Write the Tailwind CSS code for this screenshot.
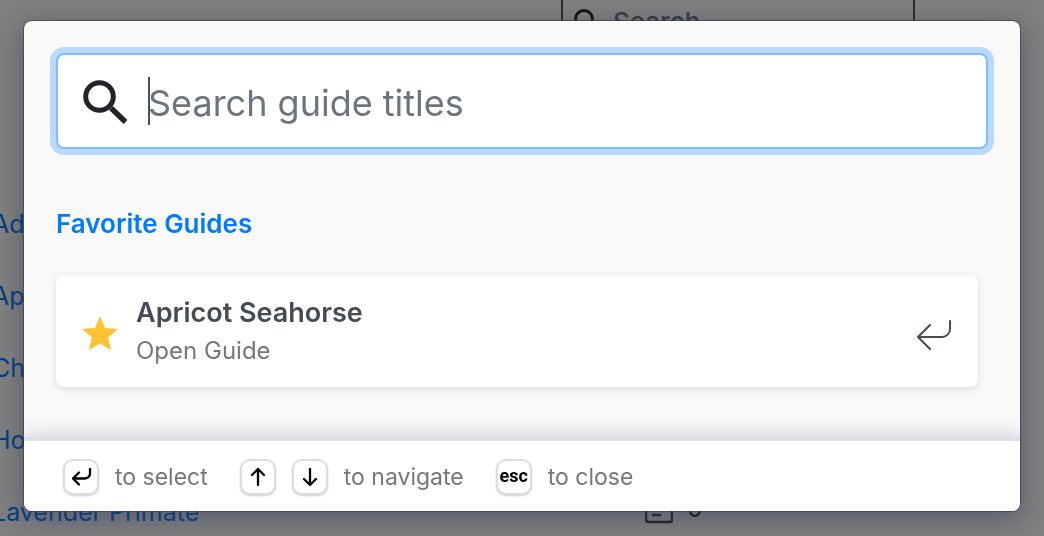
<!DOCTYPE html>
<html lang="en">
<head>
    <meta charset="UTF-8">
    <meta name="viewport" content="width=device-width, initial-scale=1.0">
    <title>Guides - Quick Search</title>
    <script src="https://cdn.jsdelivr.net/npm/@tailwindcss/browser@4"></script>
</head>
<body class="h-screen overflow-hidden bg-white font-[Inter,sans-serif]">
    <!-- Guide list page, dimmed behind the dialog -->
    <main aria-hidden="true">
        <div class="flex h-11 justify-end pr-[129px]">
            <div class="flex h-11 w-[354px] items-center border-x-2 border-b-2 border-[#555] px-2.5">
                <svg class="size-7 shrink-0 text-[#212529]" viewBox="0 0 28 28" fill="none" stroke="currentColor" stroke-width="3">
                    <circle cx="11" cy="12" r="8.5"/>
                    <path d="M17 18l9 9"/>
                </svg>
                <input type="text" aria-label="Search" placeholder="Search" tabindex="-1" class="ml-3 w-full text-[26px] font-medium placeholder:text-[#6c757d] outline-none">
            </div>
        </div>
        <div class="-ml-2 pt-[145px] text-[25px] text-[#007bff]">
            <div class="flex h-[72px] items-center"><a href="#">Ad</a></div>
            <div class="flex h-[72px] items-center"><a href="#">Ap</a></div>
            <div class="flex h-[72px] items-center"><a href="#">Ch</a></div>
            <div class="flex h-[72px] items-center"><a href="#">Ho</a></div>
            <div class="flex h-[72px] items-center">
                <a href="#" class="w-[653px]">Lavender Primate</a>
                <svg class="size-7 text-[#444]" viewBox="0 0 28 28" fill="none" stroke="currentColor" stroke-width="2.5">
                    <rect x="1" y="-3" width="26" height="26" rx="2"/>
                    <path d="M7 4h14M7 10h14M7 16h9"/>
                </svg>
                <span class="ml-3.5 pb-2 text-[#212529]">0</span>
            </div>
        </div>
    </main>

    <div class="fixed inset-0 bg-black/50 px-6 pt-[21px]">
        <div role="dialog" aria-modal="true" aria-label="Guide search" class="overflow-hidden rounded-lg bg-[#f9f9f9] shadow-[0_0_0_1px_rgba(60,60,66,0.65),0_6px_24px_2px_rgba(50,60,93,0.5)]">
            <div class="px-8 pt-8 pb-[50px]">
                <label class="flex h-24 items-center rounded-lg border-2 border-[#80bdff] bg-white px-6 ring-6 ring-[#007bff]/25">
                    <svg class="size-12 shrink-0 text-[#212529]" viewBox="0 0 48 48" fill="none" stroke="currentColor" stroke-width="5">
                        <circle cx="17.5" cy="19.5" r="13.8"/>
                        <path d="M29 31l14.5 14" stroke-width="5.5"/>
                    </svg>
                    <span class="-mr-0.5 ml-[18px] h-12 w-0.5 shrink-0 bg-[#495057]"></span>
                    <input type="text" aria-label="Search guide titles" placeholder="Search guide titles" class="w-full min-w-0 pt-1 text-4xl leading-12 text-[#495057] placeholder:text-[#6c757d] outline-none">
                </label>

                <h2 class="mt-[57px] text-[26px] leading-9 font-semibold text-[#007bff]">Favorite Guides</h2>

                <ul class="mr-2.5 mt-[33px]">
                    <li>
                        <a href="#" class="flex h-28 items-center rounded-lg bg-white px-[26px] shadow-[0_2px_6px_rgba(60,66,110,0.16)]">
                            <svg class="mt-1 w-9 shrink-0" viewBox="2 2 20 19" fill="#ffc233">
                                <path d="M12 17.27L18.18 21l-1.64-7.03L22 9.24l-7.19-.61L12 2 9.19 8.63 2 9.24l5.46 4.73L5.82 21z"/>
                            </svg>
                            <span class="ml-[18px] grow">
                                <span class="block text-[27px] leading-10 font-semibold text-[#454c54]">Apricot Seahorse</span>
                                <span class="block text-2xl leading-9 text-[#777]">Open Guide</span>
                            </span>
                            <svg class="mt-2 h-8 w-9 shrink-0 text-[#454c54]" viewBox="0 0 36 32" fill="none" stroke="currentColor" stroke-width="2" stroke-linecap="round" stroke-linejoin="round">
                                <path d="M34 2v8a8 8 0 0 1-8 8H2M14 6L2 18l12 12"/>
                            </svg>
                        </a>
                    </li>
                </ul>
            </div>

            <footer class="relative border-t-4 border-[#dee1e8] bg-white px-[39px] pt-[18px] pb-4 shadow-[0_-3px_18px_rgba(70,80,120,0.22)]">
                <div class="flex items-center text-[23px] leading-[34px] text-[#777]">
                    <kbd class="flex size-9 items-center justify-center rounded-[10px] border-2 border-[#ddd] bg-white text-black shadow-[0_1px_2px_rgba(0,0,0,0.2)]">
                        <svg class="size-6 shrink-0" viewBox="0 0 24 24" fill="none" stroke="currentColor" stroke-width="2.3" stroke-linecap="round" stroke-linejoin="round">
                            <path d="M21 4v4.5a5 5 0 0 1-5 5H4M10 7.5l-6 6 6 6"/>
                        </svg>
                    </kbd>
                    <span class="ml-4">to select</span>
                    <kbd class="ml-8 flex size-9 items-center justify-center rounded-[10px] border-2 border-[#ddd] bg-white text-black shadow-[0_1px_2px_rgba(0,0,0,0.2)]">
                        <svg class="size-6 shrink-0" viewBox="0 0 24 24" fill="none" stroke="currentColor" stroke-width="2.3" stroke-linecap="round" stroke-linejoin="round">
                            <path d="M12 20V4M6 10l6-6 6 6"/>
                        </svg>
                    </kbd>
                    <kbd class="ml-4 flex size-9 items-center justify-center rounded-[10px] border-2 border-[#ddd] bg-white text-black shadow-[0_1px_2px_rgba(0,0,0,0.2)]">
                        <svg class="size-6 shrink-0" viewBox="0 0 24 24" fill="none" stroke="currentColor" stroke-width="2.3" stroke-linecap="round" stroke-linejoin="round">
                            <path d="M12 4v16M6 14l6 6 6-6"/>
                        </svg>
                    </kbd>
                    <span class="ml-4">to navigate</span>
                    <kbd class="ml-8 flex size-9 items-center justify-center rounded-[10px] border-2 border-[#ddd] bg-white pb-0.5 font-[Roboto,sans-serif] text-lg font-bold text-black shadow-[0_1px_2px_rgba(0,0,0,0.2)]">esc</kbd>
                    <span class="ml-4">to close</span>
                </div>
            </footer>
        </div>
    </div>
</body>
</html>
